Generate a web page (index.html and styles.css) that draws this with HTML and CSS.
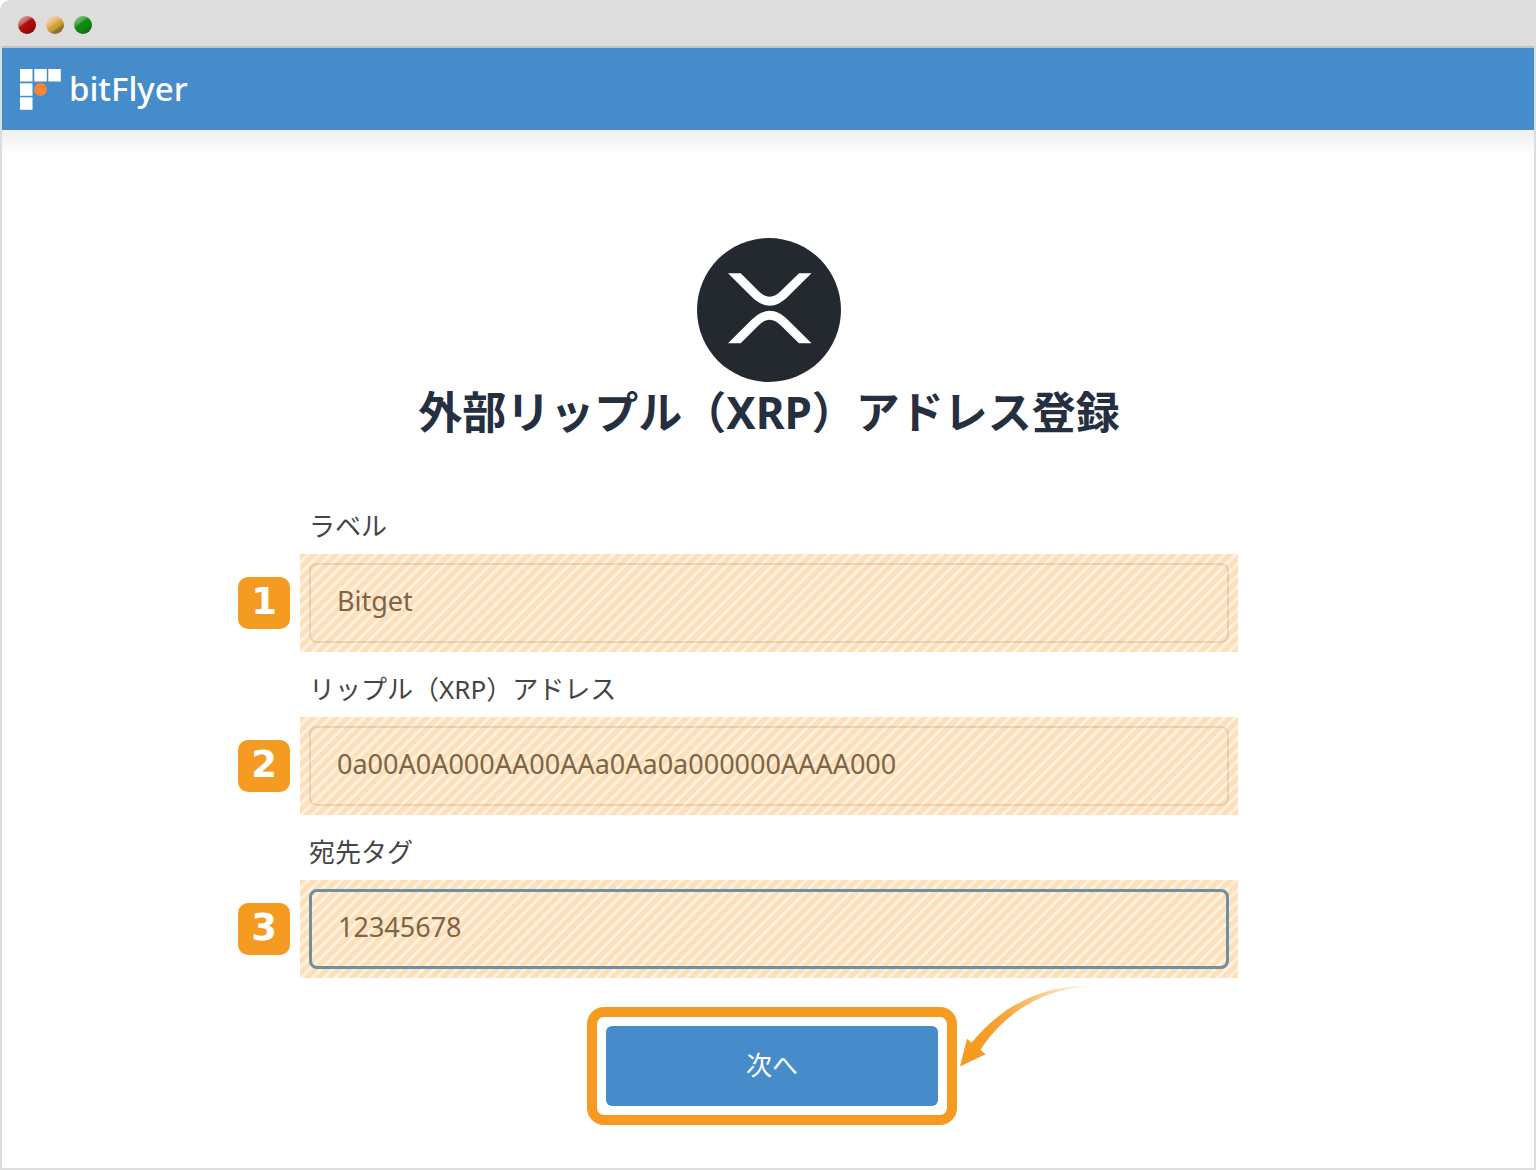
FILE: index.html
```html
<!DOCTYPE html>
<html lang="ja">

<head>
    <meta charset="UTF-8">
    <meta name="viewport" content="width=device-width, initial-scale=1.0">
    <title>外部リップル（XRP）アドレス登録</title>
    <link rel="stylesheet" href="styles.css">
</head>

<body>
    <div class="window">
        <div class="title-bar">
            <span class="dot red"></span>
            <span class="dot yellow"></span>
            <span class="dot green"></span>
        </div>

        <header class="navbar">
            <a href="/" class="logo">
                <svg class="logo-mark" viewBox="0 0 41 41" aria-hidden="true">
                    <g fill="#fff">
                        <rect x="0" y="0" width="12.5" height="12.5" />
                        <rect x="14.3" y="0" width="12.5" height="12.5" />
                        <rect x="28.3" y="0" width="12.5" height="12.5" />
                        <rect x="0" y="14.3" width="12.5" height="12.5" />
                        <rect x="0" y="28.3" width="12.5" height="12.5" />
                    </g>
                    <circle cx="20.5" cy="20.5" r="6.4" fill="#fb8337" />
                </svg>
                <span>bitFlyer</span>
            </a>
        </header>

        <main class="content">
            <svg class="coin" viewBox="0 0 144 144" aria-hidden="true">
                <circle cx="72" cy="72" r="72" fill="#242930" />
                <g fill="#fff">
                    <path d="M31 35.3H43.7L61 52.5C69.3 60.8 76.1 60.8 84.4 52.5L102 35.3H114.5L91 58.5C78.6 70.8 66.8 70.8 54.4 58.5Z" />
                    <path d="M31 105.3H43.7L61 88C69.3 79.7 76.1 79.7 84.4 88L102 105.3H114.5L91 82C78.6 69.7 66.8 69.7 54.4 82Z" />
                </g>
            </svg>
            <h1>外部リップル（XRP）アドレス登録</h1>

            <form class="address-form">
                <div class="field">
                    <label for="label">ラベル</label>
                    <span class="step">1</span>
                    <div class="highlight">
                        <input type="text" id="label" value="Bitget">
                    </div>
                </div>

                <div class="field">
                    <label for="address">リップル（XRP）アドレス</label>
                    <span class="step">2</span>
                    <div class="highlight">
                        <input type="text" id="address" value="0a00A0A000AA00AAa0Aa0a000000AAAA000">
                    </div>
                </div>

                <div class="field">
                    <label for="tag">宛先タグ</label>
                    <span class="step">3</span>
                    <div class="highlight">
                        <input type="text" id="tag" class="active" value="12345678">
                    </div>
                </div>

                <div class="actions">
                    <div class="button-frame">
                        <button type="submit" class="next-button">次へ</button>
                        <svg class="arrow" viewBox="0 0 128 81" aria-hidden="true">
                            <defs>
                                <linearGradient id="arrow-fade" gradientUnits="userSpaceOnUse" x1="20" y1="60" x2="128" y2="0">
                                    <stop offset="0" stop-color="#f59b22" />
                                    <stop offset="0.3" stop-color="#f59b22" stop-opacity="0.9" />
                                    <stop offset="1" stop-color="#f59b22" stop-opacity="0.1" />
                                </linearGradient>
                            </defs>
                            <path fill="url(#arrow-fade)" d="M0 80.5L7 52.7L11.5 56.7C40 22 80 -1 128 0.3C88 3 48 22 20.5 63.7L25.6 68.3Z" />
                        </svg>
                    </div>
                </div>
            </form>
        </main>
    </div>
</body>

</html>
```

FILE: styles.css
```css
* {
    margin: 0;
    padding: 0;
    box-sizing: border-box;
}

body {
    font-family: "Noto Sans", "Noto Sans CJK JP", sans-serif;
    background-color: #fff;
    color: #444;
}

.window {
    min-height: 100vh;
    border: 2px solid #ddd;
    border-top: none;
    border-top-left-radius: 10px;
    overflow: hidden;
}

/* browser bar */
.title-bar {
    display: flex;
    align-items: center;
    gap: 10px;
    height: 48px;
    padding: 4px 16px 0;
    background-color: #ddd;
    border-bottom: 2px solid #c2c2c2;
}

.dot {
    width: 18px;
    height: 18px;
    border-radius: 50%;
}

.red {
    background: linear-gradient(145deg, #e09a9a 10%, #c96060 34%, #b31212 42%, #a80808 65%, #7d0c0c 85%);
}

.yellow {
    background: linear-gradient(145deg, #f3cfae 15%, #e8b679 38%, #d9a93a 46%, #c99f35 60%, #92732a 72%);
}

.green {
    background: linear-gradient(145deg, #7fc080 10%, #4aa54a 34%, #108c10 42%, #0c860c 65%, #1b661b 80%);
}

.navbar {
    display: flex;
    align-items: center;
    height: 82px;
    padding: 0 18px;
    background-color: #468ccb;
}

.logo {
    display: flex;
    align-items: center;
    gap: 8px;
    color: #fff;
    font-size: 33px;
    font-weight: 500;
    line-height: 48px;
    text-decoration: none;
}

.logo-mark {
    width: 41px;
    height: 41px;
}

.content {
    display: flex;
    flex-direction: column;
    align-items: center;
    padding: 108px 0 40px 2px;
    background: linear-gradient(#f0f0f2, #f3f3f4 9px, #fff 24px);
}

.coin {
    width: 144px;
    height: 144px;
}

h1 {
    margin-bottom: 47px;
    font-size: 44px;
    line-height: 60px;
    color: #252f3f;
}

/* right padding balances the step number column */
.address-form {
    width: 100%;
    max-width: 1062px;
    padding-right: 62px;
}

.field {
    display: grid;
    grid-template-columns: 52px 1fr;
    column-gap: 10px;
    align-items: center;
}

.field label {
    grid-column: 2;
    padding: 12px 9px 3px;
    font-size: 26px;
    line-height: 50px;
}

.step {
    height: 52px;
    border-radius: 10px;
    background-color: #f59b22;
    color: #fff;
    font-family: "DejaVu Sans", sans-serif;
    font-size: 37px;
    font-weight: bold;
    line-height: 50px;
    text-align: center;
}

.highlight {
    padding: 9px;
    background: repeating-linear-gradient(135deg, #fddfba 0, #fddfba 4px, #fef1df 5px, #fef1df 7px, #fddfba 8px);
}

.highlight input {
    display: block;
    width: 100%;
    height: 80px;
    padding: 0 26px 5px;
    background: transparent;
    border: 2px solid rgba(120, 100, 80, 0.16);
    border-radius: 8px;
    outline: none;
    color: #7d6545;
    font-family: inherit;
    font-size: 27px;
}

.highlight input.active {
    border: 3px solid #71909f;
}

.actions {
    display: flex;
    justify-content: center;
    margin-top: 29px;
    padding-left: 68px;
}

.button-frame {
    position: relative;
    width: 370px;
    padding: 9px;
    border: 10px solid #f59b22;
    border-radius: 17px;
}

.next-button {
    display: block;
    width: 100%;
    height: 80px;
    padding-bottom: 4px;
    background-color: #468ccb;
    border: none;
    border-radius: 6px;
    color: #fff;
    font-family: inherit;
    font-size: 26px;
    cursor: pointer;
}

.next-button:hover {
    background-color: #3a7dba;
}

.arrow {
    position: absolute;
    left: 363px;
    top: -31px;
    width: 128px;
    height: 81px;
}
```
